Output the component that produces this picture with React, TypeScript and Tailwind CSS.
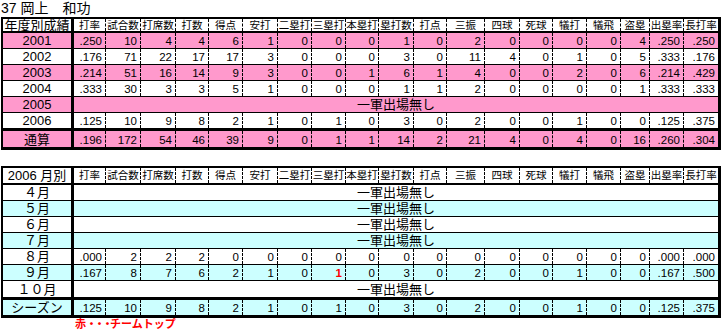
const cols = [
  { h: '打率', w: 'w-[32px]' },
  { h: '試合数', w: 'w-[35px]' },
  { h: '打席数', w: 'w-[35px]' },
  { h: '打数', w: 'w-[33px]' },
  { h: '得点', w: 'w-[34px]' },
  { h: '安打', w: 'w-[35px]' },
  { h: '二塁打', w: 'w-[34px]' },
  { h: '三塁打', w: 'w-[34px]' },
  { h: '本塁打', w: 'w-[33px]' },
  { h: '塁打数', w: 'w-[35px]' },
  { h: '打点', w: 'w-[33px]' },
  { h: '三振', w: 'w-[38px]' },
  { h: '四球', w: 'w-[35px]' },
  { h: '死球', w: 'w-[33px]' },
  { h: '犠打', w: 'w-[34px]' },
  { h: '犠飛', w: 'w-[34px]' },
  { h: '盗塁', w: 'w-[29px]' },
  { h: '出塁率', w: 'w-[34px]' },
  { h: '長打率', w: 'w-[34px]' },
];

type Row = {
  label: string;
  bg: string;
  vals?: string[];
  red?: number;
  h: string;
  border: string;
};

const NONE = '一軍出場無し';

const yearRows: Row[] = [
  { label: '2001', bg: 'bg-[#ff99cc]', h: 'h-[16px]', border: 'border-b', vals: ['.250', '10', '4', '4', '6', '1', '0', '0', '0', '1', '0', '2', '0', '0', '0', '0', '4', '.250', '.250'] },
  { label: '2002', bg: 'bg-white', h: 'h-[16px]', border: 'border-b', vals: ['.176', '71', '22', '17', '17', '3', '0', '0', '0', '3', '0', '11', '4', '0', '1', '0', '5', '.333', '.176'] },
  { label: '2003', bg: 'bg-[#ff99cc]', h: 'h-[16px]', border: 'border-b', vals: ['.214', '51', '16', '14', '9', '3', '0', '0', '1', '6', '1', '4', '0', '0', '2', '0', '6', '.214', '.429'] },
  { label: '2004', bg: 'bg-white', h: 'h-[16px]', border: 'border-b', vals: ['.333', '30', '3', '3', '5', '1', '0', '0', '0', '1', '1', '2', '0', '0', '0', '0', '1', '.333', '.333'] },
  { label: '2005', bg: 'bg-[#ff99cc]', h: 'h-[16px]', border: 'border-b' },
  { label: '2006', bg: 'bg-white', h: 'h-[18px]', border: 'border-b-[3px]', vals: ['.125', '10', '9', '8', '2', '1', '0', '1', '0', '3', '0', '2', '0', '0', '1', '0', '0', '.125', '.375'] },
  { label: '通算', bg: 'bg-[#ff99cc]', h: 'h-[16px]', border: '', vals: ['.196', '172', '54', '46', '39', '9', '0', '1', '1', '14', '2', '21', '4', '0', '4', '0', '16', '.260', '.304'] },
];

const monthRows: Row[] = [
  { label: '４月', bg: 'bg-white', h: 'h-[16px]', border: 'border-b' },
  { label: '５月', bg: 'bg-[#ccffff]', h: 'h-[16px]', border: 'border-b' },
  { label: '６月', bg: 'bg-white', h: 'h-[16px]', border: 'border-b' },
  { label: '７月', bg: 'bg-[#ccffff]', h: 'h-[16px]', border: 'border-b' },
  { label: '８月', bg: 'bg-white', h: 'h-[16px]', border: 'border-b', vals: ['.000', '2', '2', '2', '0', '0', '0', '0', '0', '0', '0', '0', '0', '0', '0', '0', '0', '.000', '.000'] },
  { label: '９月', bg: 'bg-[#ccffff]', h: 'h-[16px]', border: 'border-b', red: 7, vals: ['.167', '8', '7', '6', '2', '1', '0', '1', '0', '3', '0', '2', '0', '0', '1', '0', '0', '.167', '.500'] },
  { label: '１０月', bg: 'bg-white', h: 'h-[19px]', border: 'border-b-[3px]' },
  { label: 'シーズン', bg: 'bg-[#ccffff]', h: 'h-[15px]', border: '', vals: ['.125', '10', '9', '8', '2', '1', '0', '1', '0', '3', '0', '2', '0', '0', '1', '0', '0', '.125', '.375'] },
];

function HeaderRow({ label, h }: { label: string; h: string }) {
  return (
    <div className={`flex ${h} border-b-2 border-black bg-white`}>
      <div className="w-[71px] shrink-0 border-r-[3px] border-black flex items-center justify-center text-[13px] leading-none">
        {label}
      </div>
      {cols.map((c, i) => (
        <div
          key={c.h}
          className={`${c.w} shrink-0 flex items-center justify-center text-[10.5px] leading-none whitespace-nowrap ${
            i < cols.length - 1 ? 'border-r border-dashed border-black' : ''
          }`}
        >
          {c.h}
        </div>
      ))}
    </div>
  );
}

function DataRow({ row }: { row: Row }) {
  return (
    <div className={`flex ${row.h} ${row.border} border-black ${row.bg}`}>
      <div className="w-[71px] shrink-0 border-r-[3px] border-black flex items-end justify-center text-[13px] leading-none pb-[1px]">
        {row.label}
      </div>
      {row.vals ? (
        row.vals.map((v, i) => (
          <div
            key={i}
            className={`${cols[i].w} shrink-0 flex items-end justify-end pr-[3px] text-[11.5px] leading-none pb-[1px] ${
              i < cols.length - 1 ? 'border-r border-dashed border-black' : ''
            } ${row.red === i ? 'text-[#ff0000] font-bold' : ''}`}
          >
            {v}
          </div>
        ))
      ) : (
        <div className="flex-1 flex items-end justify-center text-[13px] leading-none pb-[1px]">{NONE}</div>
      )}
    </div>
  );
}

export default function App() {
  return (
    <div className="w-[723px] h-[330px] bg-white text-black font-['Liberation_Sans','Noto_Sans_CJK_JP',sans-serif] overflow-hidden">
      <div className="h-[17px] pl-[1px] text-[14px] leading-[16px] whitespace-pre">37 岡上　和功</div>

      <div className="ml-[1px] w-[720px] border-l-2 border-r-[3px] border-t-2 border-b-[3px] border-black">
        <HeaderRow label="年度別成績" h="h-[14px]" />
        {yearRows.map((r) => (
          <DataRow key={r.label} row={r} />
        ))}
      </div>

      <div className="mt-[16px] ml-[1px] w-[720px] border-l-2 border-r-[3px] border-t-2 border-b-[3px] border-black">
        <HeaderRow label="2006 月別" h="h-[17px]" />
        {monthRows.map((r) => (
          <DataRow key={r.label} row={r} />
        ))}
      </div>

      <div className="pl-[75px] text-[11px] leading-[12px] font-bold text-[#ff0000] whitespace-nowrap">
        赤<span className="tracking-[-3px]">・・・</span>チームトップ
      </div>
    </div>
  );
}
